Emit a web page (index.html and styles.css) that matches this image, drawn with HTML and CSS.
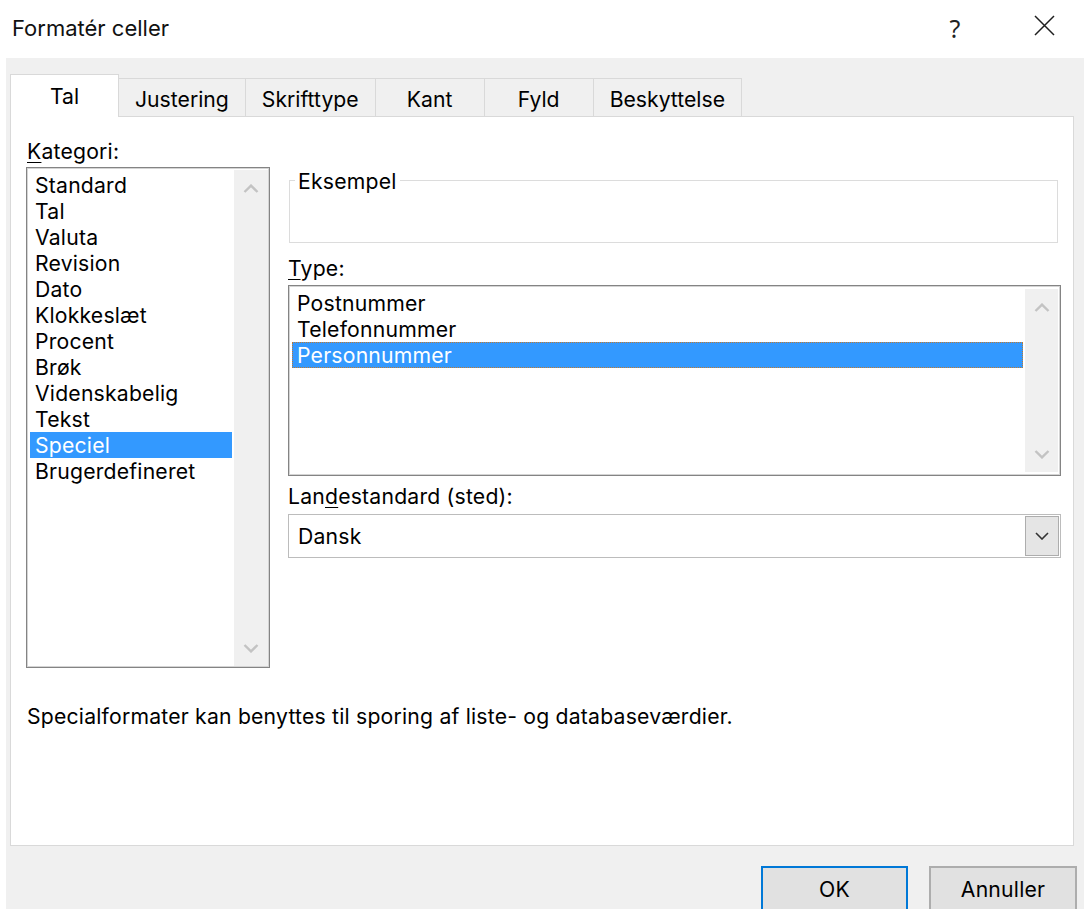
FILE: index.html
```html
<!DOCTYPE html>
<html lang="da">
<head>
<meta charset="utf-8">
<title>Formatér celler</title>
<link rel="stylesheet" href="styles.css">
</head>
<body>
<div class="window">
  <header class="titlebar">
    <h1 class="title">Formatér celler</h1>
    <div class="caption-buttons">
      <span class="cap-btn help">?</span>
      <span class="cap-btn close">
        <svg width="21" height="21" viewBox="0 0 21 21"><path d="M1 1L20 20M20 1L1 20" stroke="#1f1f1f" stroke-width="1.5" fill="none"/></svg>
      </span>
    </div>
  </header>

  <div class="dialog">
    <nav class="tabs">
      <div class="tab active">Tal</div>
      <div class="tab">Justering</div>
      <div class="tab">Skrifttype</div>
      <div class="tab">Kant</div>
      <div class="tab">Fyld</div>
      <div class="tab">Beskyttelse</div>
    </nav>

    <section class="panel">
      <div class="panel-grid">
        <div class="col-left">
          <div class="label"><u>K</u>ategori:</div>
          <div class="listbox category">
            <ul class="items">
              <li>Standard</li>
              <li>Tal</li>
              <li>Valuta</li>
              <li>Revision</li>
              <li>Dato</li>
              <li>Klokkeslæt</li>
              <li>Procent</li>
              <li>Brøk</li>
              <li>Videnskabelig</li>
              <li>Tekst</li>
              <li class="selected">Speciel</li>
              <li>Brugerdefineret</li>
            </ul>
            <div class="scrollbar">
              <span class="scroll-arrow"><svg width="16" height="9" viewBox="0 0 16 9"><polyline points="1.5,8 8,1.6 14.5,8" fill="none" stroke="#c3c3c3" stroke-width="2.4"/></svg></span>
              <span class="scroll-arrow"><svg width="16" height="9" viewBox="0 0 16 9"><polyline points="1.5,1 8,7.4 14.5,1" fill="none" stroke="#c3c3c3" stroke-width="2.4"/></svg></span>
            </div>
          </div>
        </div>

        <div class="col-right">
          <div class="groupbox"><span class="legend">Eksempel</span></div>
          <div class="label type-label"><u>T</u>ype:</div>
          <div class="listbox types">
            <ul class="items">
              <li>Postnummer</li>
              <li>Telefonnummer</li>
              <li class="selected focused">Personnummer</li>
            </ul>
            <div class="scrollbar">
              <span class="scroll-arrow"><svg width="16" height="9" viewBox="0 0 16 9"><polyline points="1.5,8 8,1.6 14.5,8" fill="none" stroke="#c3c3c3" stroke-width="2.4"/></svg></span>
              <span class="scroll-arrow"><svg width="16" height="9" viewBox="0 0 16 9"><polyline points="1.5,1 8,7.4 14.5,1" fill="none" stroke="#c3c3c3" stroke-width="2.4"/></svg></span>
            </div>
          </div>
          <div class="label locale-label">Lan<u>d</u>estandard (sted):</div>
          <div class="combo">
            <span class="combo-value">Dansk</span>
            <span class="combo-btn"><svg width="14" height="8" viewBox="0 0 14 8"><polyline points="1,1 7,7 13,1" fill="none" stroke="#333" stroke-width="1.6"/></svg></span>
          </div>
        </div>
      </div>
      <p class="description">Specialformater kan benyttes til sporing af liste- og databaseværdier.</p>
    </section>

    <footer class="footer">
      <button class="btn default">OK</button>
      <button class="btn">Annuller</button>
    </footer>
  </div>
</div>
</body>
</html>
```
FILE: styles.css
```css
html, body {
  margin: 0;
  padding: 0;
}

body {
  width: 1084px;
  height: 909px;
  overflow: hidden;
  font-family: Inter, "Noto Sans", sans-serif;
  font-size: 21.2px;
  letter-spacing: 0.2px;
  color: #000;
  background: #fff;
}

.window {
  height: 909px;
  display: flex;
  flex-direction: column;
  background: #fff;
}

/* ---- title bar ---- */
.titlebar {
  height: 58px;
  flex: none;
  display: flex;
  align-items: stretch;
}

.title {
  flex: 1;
  margin: 0;
  padding: 0 0 2px 12px;
  font-size: 22px;
  font-weight: 400;
  letter-spacing: 0;
  display: flex;
  align-items: center;
  color: #111;
}

.caption-buttons {
  display: flex;
}

.cap-btn {
  display: flex;
  align-items: center;
  justify-content: center;
  box-sizing: border-box;
}

.help {
  width: 100px;
  padding-bottom: 3px;
  font-family: "Noto Sans", sans-serif;
  font-size: 25px;
  color: #222;
}

.close {
  width: 79px;
  padding-bottom: 7px;
}

/* ---- dialog body ---- */
.dialog {
  flex: 1;
  min-height: 0;
  margin-left: 6px;
  padding-left: 4px;
  background: #f0f0f0;
  display: flex;
  flex-direction: column;
}

.tabs {
  height: 58px;
  flex: none;
  display: flex;
  align-items: flex-end;
}

.tab {
  height: 38px;
  min-width: 110px;
  box-sizing: border-box;
  margin-left: -1px;
  padding: 4px 16px 0;
  border: 1px solid #d9d9d9;
  border-bottom: 0;
  background: #f0f0f0;
  line-height: 32px;
  letter-spacing: 0;
  text-align: center;
  white-space: nowrap;
}

.tab.active {
  height: 43px;
  min-width: 109px;
  margin-left: 0;
  margin-bottom: -1px;
  padding-top: 0;
  line-height: 42px;
  background: #fff;
  position: relative;
  z-index: 1;
}

.panel {
  width: 1064px;
  height: 730px;
  flex: none;
  box-sizing: border-box;
  background: #fff;
  border: 1px solid #d9d9d9;
  padding: 21px 12px 0 15px;
}

.panel-grid {
  display: grid;
  grid-template-columns: 244px 773px;
  column-gap: 18px;
}

.label {
  height: 26px;
  line-height: 26px;
  white-space: nowrap;
}

.label u {
  text-underline-offset: 3px;
  text-decoration-thickness: 1px;
}

.col-left .label {
  margin-bottom: 3px;
  padding-left: 1px;
}

/* ---- list boxes ---- */
.listbox {
  box-sizing: border-box;
  border: 1px solid #848484;
  box-shadow: inset 0 0 0 1px #d4d4d4;
  background: #fff;
  display: flex;
}

.items {
  flex: 1;
  list-style: none;
  margin: 0;
  padding: 4px 2px 0 3px;
}

.items li {
  height: 26px;
  line-height: 26px;
  padding-left: 5px;
  white-space: nowrap;
}

.items li.selected {
  background: #3399ff;
  color: #fff;
}

.items li.focused {
  outline: 1px dotted #c07a30;
  outline-offset: -1px;
}

.scrollbar {
  width: 34px;
  margin: 2px 1px 1px 0;
  background: #f0f0f0;
  display: flex;
  flex-direction: column;
  justify-content: space-between;
}

.scroll-arrow {
  height: 36px;
  display: flex;
  align-items: center;
  justify-content: center;
}

.category {
  height: 501px;
}

.types {
  height: 191px;
  margin-top: 4px;
}

.types .scrollbar {
  width: 33px;
  margin: 3px 2px 3px 0;
}

/* ---- right column ---- */
.groupbox {
  height: 63px;
  margin: 42px 3px 0 1px;
  box-sizing: border-box;
  border: 1px solid #dcdcdc;
  position: relative;
}

.legend {
  position: absolute;
  top: -13px;
  left: 5px;
  padding: 0 3px;
  line-height: 26px;
  background: #fff;
}

.type-label {
  margin-top: 12px;
}

.locale-label {
  margin-top: 7px;
}

.combo {
  height: 44px;
  margin-top: 5px;
  box-sizing: border-box;
  padding: 1px;
  border: 1px solid #bcbcbc;
  background: #fff;
  display: flex;
  align-items: stretch;
}

.combo-value {
  flex: 1;
  padding-left: 8px;
  display: flex;
  align-items: center;
}

.combo-btn {
  width: 34px;
  box-sizing: border-box;
  border: 1px solid #adadad;
  background: #e5e5e5;
  display: flex;
  align-items: center;
  justify-content: center;
}

.description {
  margin: 35px 0 0 1px;
  line-height: 26px;
}

/* ---- footer buttons ---- */
.footer {
  flex: none;
  display: flex;
  justify-content: flex-end;
  gap: 21px;
  padding: 20px 7px 0 0;
}

.btn {
  width: 147px;
  height: 45px;
  padding: 0;
  font: inherit;
  letter-spacing: inherit;
  color: #000;
  background: #e1e1e1;
  border: 2px solid #adadad;
}

.btn + .btn {
  width: 148px;
}

.btn.default {
  border-color: #0078d7;
}
```
